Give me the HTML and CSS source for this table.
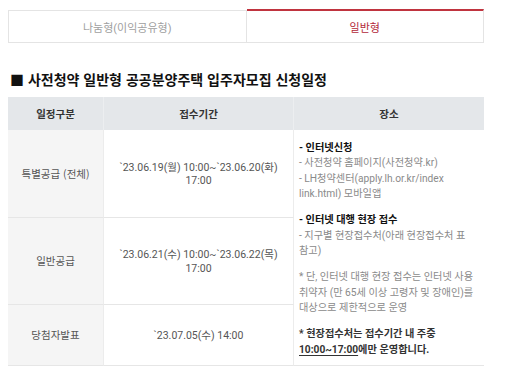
FILE: index.html
```html
<!DOCTYPE html>
<html lang="ko">
<head>
<meta charset="utf-8">
<link rel="stylesheet" href="styles.css">
</head>
<body>
<div class="page">
  <div class="tabs">
    <div class="tab">나눔형(이익공유형)</div>
    <div class="tab tab-active">일반형</div>
  </div>

  <h2 class="title">■ 사전청약 일반형 공공분양주택 입주자모집 신청일정</h2>

  <div class="schedule">
    <div class="th c1">일정구분</div>
    <div class="th c2">접수기간</div>
    <div class="th c3">장소</div>

    <div class="td c1 r1">특별공급 (전체)</div>
    <div class="td c2 r1">`23.06.19(월) 10:00~`23.06.20(화)<br>17:00</div>

    <div class="td place">
      <p class="note"><b class="head">- 인터넷신청</b><br>- 사전청약 홈페이지(사전청약.kr)<br>- LH청약센터(apply.lh.or.kr/index<br>link.html) 모바일앱</p>
      <p class="note"><b class="head">- 인터넷 대행 현장 접수</b><br>- 지구별 현장접수처(아래 현장접수처 표<br>참고)</p>
      <p class="note">* 단, 인터넷 대행 현장 접수는 인터넷 사용<br>취약자 (만 65세 이상 고령자 및 장애인)를<br>대상으로 제한적으로 운영</p>
      <p class="note strong">* 현장접수처는 접수기간 내 주중<br><u>10:00~17:00</u>에만 운영합니다.</p>
    </div>

    <div class="td c1 r2">일반공급</div>
    <div class="td c2 r2">`23.06.21(수) 10:00~`23.06.22(목)<br>17:00</div>

    <div class="td c1 r3">당첨자발표</div>
    <div class="td c2 r3">`23.07.05(수) 14:00</div>
  </div>
</div>
</body>
</html>
```

FILE: styles.css
```css
* { box-sizing: border-box; }

html, body {
  margin: 0;
  padding: 0;
  background: #fff;
}

body {
  font-family: Roboto, "Noto Sans CJK KR", sans-serif;
  color: #555;
}

.page {
  width: 476px;
  margin-left: 8px;
  padding-top: 9px;
}

.tabs {
  display: flex;
  align-items: flex-end;
}

.tab {
  flex: 1;
  height: 33px;
  display: flex;
  align-items: center;
  justify-content: center;
  border: 1px solid #e4e4e4;
  font-size: 11px;
  color: #a0a0a0;
}

.tab-active {
  height: 34px;
  border-left: none;
  border-top: 2px solid #c0343f;
  color: #b3283a;
  padding-top: 1px;
}

.title {
  margin: 26px 0 0 2px;
  font-size: 14px;
  line-height: 20px;
  font-weight: 700;
  color: #111;
  font-family: "Noto Sans CJK KR", sans-serif;
}

.schedule {
  margin-top: 8px;
  display: grid;
  grid-template-columns: 96px 190px 190px;
  grid-template-rows: 33px 88px 87px 61px;
}

.th {
  background: #e4e7ea;
  display: flex;
  align-items: center;
  justify-content: center;
  font-size: 10.5px;
  font-weight: 700;
  color: #333;
  font-family: "Noto Sans CJK KR", sans-serif;
}

.th.c1, .th.c2 { border-right: 1px solid #eceef0; }

.td {
  border-bottom: 1px solid #e6e6e6;
  font-size: 10.5px;
  line-height: 13.5px;
}

.td.c1 {
  background: #f5f5f5;
  border-right: 1px solid #ececec;
  display: flex;
  align-items: center;
  justify-content: center;
  color: #555;
  font-family: "Noto Sans CJK KR", sans-serif;
}

.td.c2 {
  border-right: 1px solid #ececec;
  display: flex;
  align-items: center;
  justify-content: center;
  text-align: center;
  color: #555;
  padding-top: 1px;
}

.r1 { grid-row: 2; }
.r2 { grid-row: 3; }
.r3 { grid-row: 4; }
.c1 { grid-column: 1; }
.c2 { grid-column: 2; }
.c3 { grid-column: 3; }

.place {
  grid-column: 3;
  grid-row: 2 / 5;
  padding: 9.5px 0 0 5px;
  font-size: 10.2px;
  line-height: 15.5px;
  color: #8a8a8a;
  white-space: nowrap;
}

.note {
  margin: 0 0 10.5px;
}

.head {
  color: #111;
  font-weight: 700;
}

.strong {
  color: #333;
  font-weight: 700;
}

.strong u {
  text-underline-offset: 2px;
}
```
